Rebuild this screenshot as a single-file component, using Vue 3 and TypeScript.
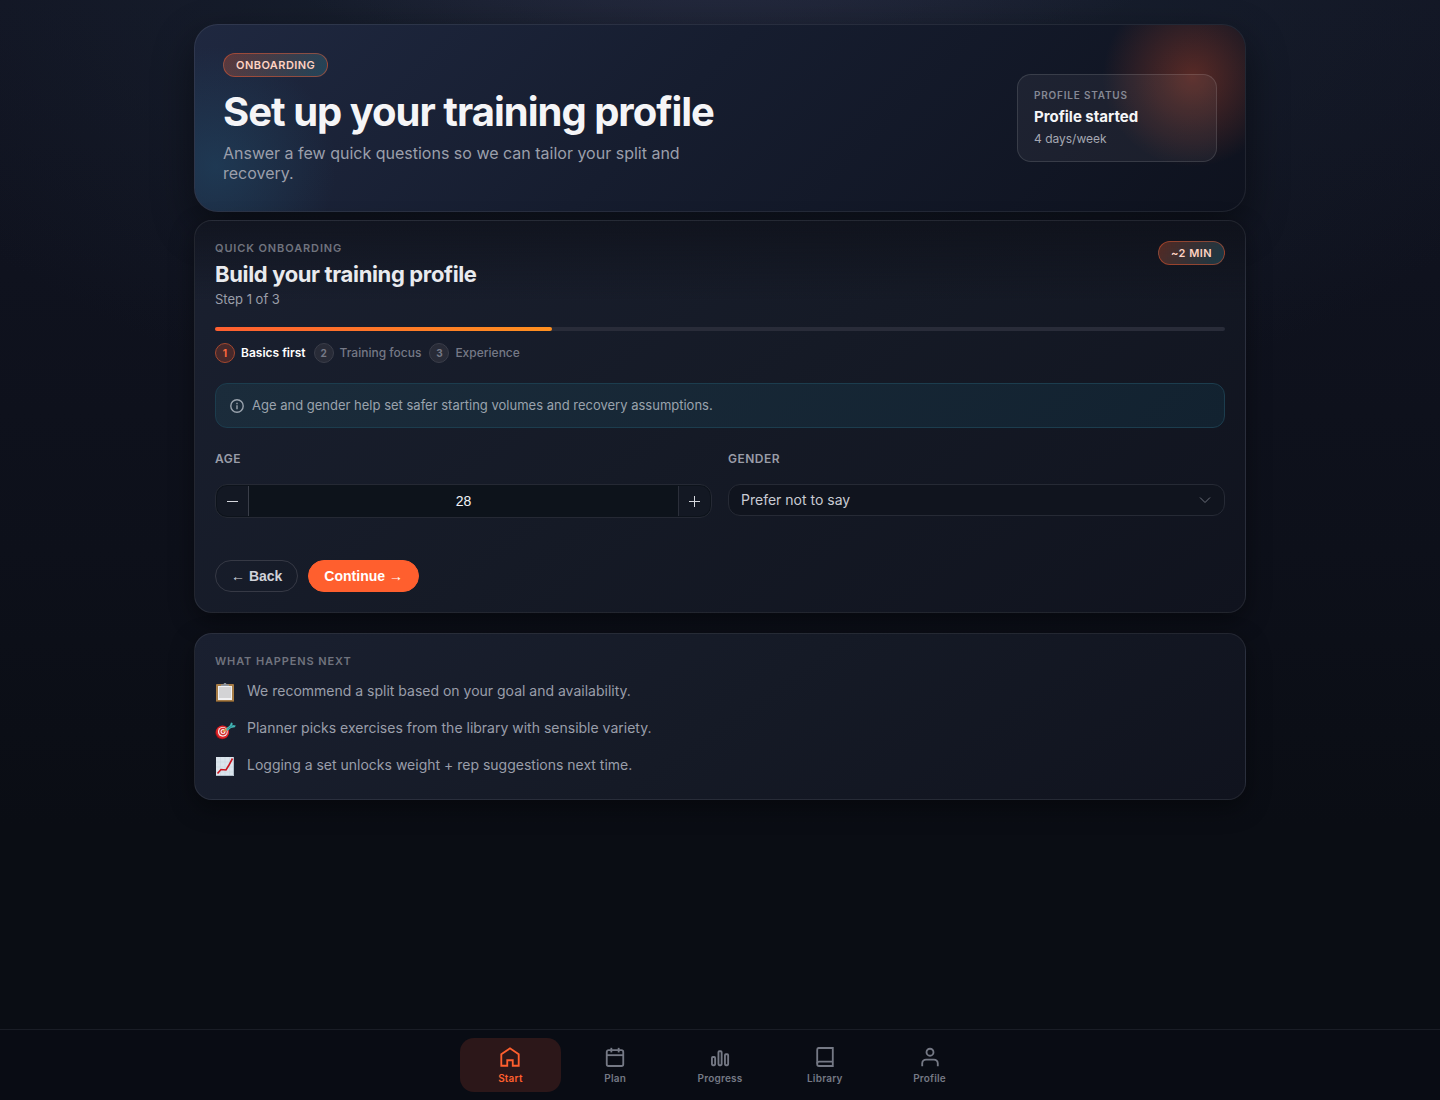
<script setup lang="ts">
import { ref } from 'vue'

const age = ref(28)
const gender = ref('na')
const step = ref(1)
const progress = 33.4

const steps = ['Basics first', 'Training focus', 'Experience']

const nextItems = [
  { icon: 'clipboard', text: 'We recommend a split based on your goal and availability.' },
  { icon: 'target', text: 'Planner picks exercises from the library with sensible variety.' },
  { icon: 'chart', text: 'Logging a set unlocks weight + rep suggestions next time.' },
]

const tabs = [
  { label: 'Start', paths: ['M2.5 9 12 2.5 21.5 9v12.5H15v-6H9v6H2.5z'] },
  {
    label: 'Plan',
    paths: [
      'M5 4.5h14a2 2 0 0 1 2 2v13.3a2 2 0 0 1-2 2H5a2 2 0 0 1-2-2V6.5a2 2 0 0 1 2-2z',
      'M3 10h18',
      'M8 2v5',
      'M16 2v5',
    ],
  },
  {
    label: 'Progress',
    paths: [
      'M4.2 12h1.5a1 1 0 0 1 1 1v7a1 1 0 0 1-1 1H4.2a1 1 0 0 1-1-1v-7a1 1 0 0 1 1-1z',
      'M11.3 5.7h1.5a1 1 0 0 1 1 1V20a1 1 0 0 1-1 1h-1.5a1 1 0 0 1-1-1V6.7a1 1 0 0 1 1-1z',
      'M18.4 9h1.5a1 1 0 0 1 1 1v10a1 1 0 0 1-1 1h-1.5a1 1 0 0 1-1-1V10a1 1 0 0 1 1-1z',
    ],
  },
  { label: 'Library', paths: ['M5 2.2h15.5v19.6H5.5a2 2 0 0 1-2-2V4a1.8 1.8 0 0 1 1.5-1.8z', 'M3.5 19a2 2 0 0 1 2-2h15'] },
  { label: 'Profile', paths: ['M12 3a3.8 3.8 0 1 1 0 7.6A3.8 3.8 0 0 1 12 3z', 'M3.5 22v-3a4.2 4.2 0 0 1 4.2-4.2h8.6a4.2 4.2 0 0 1 4.2 4.2v3'] },
]
</script>

<template>
  <div class="app">
    <main class="page">
      <header class="hero">
        <div class="hero-copy">
          <span class="pill">Onboarding</span>
          <h1>Set up your training profile</h1>
          <p>Answer a few quick questions so we can tailor your split and recovery.</p>
        </div>
        <aside class="status">
          <span class="status-label">Profile status</span>
          <strong>Profile started</strong>
          <span class="status-sub">4 days/week</span>
        </aside>
      </header>

      <section class="card form-card">
        <div class="card-head">
          <div>
            <div class="eyebrow">Quick onboarding</div>
            <h2>Build your training profile</h2>
            <p class="step-text">Step {{ step }} of 3</p>
          </div>
          <span class="pill">~2 min</span>
        </div>

        <div class="track"><div class="fill" :style="{ width: progress + '%' }"></div></div>

        <ol class="steps">
          <li v-for="(s, i) in steps" :key="s" :class="{ active: i + 1 === step }">
            <span class="dot">{{ i + 1 }}</span>{{ s }}
          </li>
        </ol>

        <div class="info">
          <svg width="14" height="14" viewBox="0 0 14 14" fill="none" stroke="currentColor" stroke-width="1.4" aria-hidden="true">
            <circle cx="7" cy="7" r="6.2" />
            <path d="M7 6.2v4M7 3.8v1.4" />
          </svg>
          <span>Age and gender help set safer starting volumes and recovery assumptions.</span>
        </div>

        <div class="fields">
          <div class="field">
            <label for="age">Age</label>
            <div class="stepper">
              <button type="button" aria-label="Decrease age" @click="age--">
                <svg width="11" height="11" viewBox="0 0 11 11" stroke="currentColor"><path d="M0 5.5h11" /></svg>
              </button>
              <input id="age" v-model="age" type="text" inputmode="numeric" />
              <button type="button" aria-label="Increase age" @click="age++">
                <svg width="11" height="11" viewBox="0 0 11 11" stroke="currentColor"><path d="M0 5.5h11M5.5 0v11" /></svg>
              </button>
            </div>
          </div>
          <div class="field">
            <label for="gender">Gender</label>
            <div class="select">
              <select id="gender" v-model="gender">
                <option value="na">Prefer not to say</option>
                <option value="f">Female</option>
                <option value="m">Male</option>
              </select>
              <svg width="12" height="12" viewBox="0 0 12 12" fill="none" stroke="currentColor" aria-hidden="true"><path d="M1 3.5l5 5 5-5" /></svg>
            </div>
          </div>
        </div>

        <div class="actions">
          <button type="button" class="btn ghost"><span class="arrow">←</span> Back</button>
          <button type="button" class="btn primary">Continue <span class="arrow">→</span></button>
        </div>
      </section>

      <section class="card">
        <div class="eyebrow">What happens next</div>
        <ul class="next">
          <li v-for="n in nextItems" :key="n.text">
            <svg v-if="n.icon === 'clipboard'" width="20" height="22" viewBox="0 -1 20 22" aria-hidden="true">
              <rect x="1" y="2" width="18" height="18" rx="1" fill="#a67c46" />
              <rect x="1" y="19" width="18" height="1" fill="#73532c" />
              <rect x="3" y="4" width="14" height="14" fill="#f1f1f3" />
              <rect x="4" y="5" width="12" height="11" fill="#d3d3d5" />
              <path d="M6 4V2.500h2.500L9 1h2l.5 1.500H14V4z" fill="#8b939e" />
            </svg>
            <svg v-else-if="n.icon === 'target'" width="20" height="22" viewBox="0 -4 20 22" aria-hidden="true">
              <ellipse cx="7.200" cy="10.500" rx="6.800" ry="6.800" fill="#a50f16" />
              <ellipse cx="7.600" cy="10" rx="6.500" ry="6.400" fill="#df2529" />
              <circle cx="7.800" cy="9.800" r="4.900" fill="#f3e9e7" />
              <circle cx="8" cy="9.600" r="3.800" fill="#d62b2d" />
              <circle cx="8" cy="9.600" r="2.500" fill="#f3e9e7" />
              <circle cx="8" cy="9.600" r="1.300" fill="#d62b2d" />
              <path d="M8 9.600l5-3.600" stroke="#d8a13a" stroke-width="1.400" />
              <path d="M11 6.800l4-3.600 1-2.700 1.600.4-.2 2.100 3.400.4-1 1.800-3.800.9-3.600 3z" fill="#43b6b5" />
              <path d="M12.500 7l5.500-3.800" stroke="#287f88" stroke-width=".8" />
            </svg>
            <svg v-else width="20" height="22" viewBox="0 -1 20 22" fill="none" aria-hidden="true">
              <rect x="1" y="1" width="18" height="19" fill="#dce5ed" />
              <path d="M1 6h18M1 11h18M1 16h18M5.500 1v19M10 1v19M14.500 1v19" stroke="#cbd7e1" stroke-width=".6" />
              <path d="M1 19.500h17.500V1" stroke="#a6b4bf" stroke-width=".8" />
              <path d="M2.500 17.500l3.500-4 5 .5 3-5 3.500-6.500" stroke="#c9151f" stroke-width="1.600" />
            </svg>
            <span>{{ n.text }}</span>
          </li>
        </ul>
      </section>
    </main>

    <nav class="tabbar">
      <div class="tabs">
        <a v-for="(t, i) in tabs" :key="t.label" href="#" class="tab" :class="{ current: i === 0 }">
          <svg width="22" height="22" viewBox="0 0 24 24" fill="none" stroke="currentColor" stroke-width="2" aria-hidden="true">
            <path v-for="d in t.paths" :key="d" :d="d" />
          </svg>
          <span>{{ t.label }}</span>
        </a>
      </div>
    </nav>
  </div>
</template>

<style>
body {
  background: #090c14;
}
</style>

<style scoped>
.app {
  box-sizing: border-box;
  min-height: 100vh;
  display: flex;
  flex-direction: column;
  font-family: Inter, "Liberation Sans", sans-serif;
  color: #f5f5f7;
  background:
    radial-gradient(500px 200px at 50% -10%, rgba(80, 70, 110, 0.4), transparent),
    radial-gradient(1200px 700px at 50% -10%, rgba(28, 40, 56, 0.8), transparent 80%),
    linear-gradient(180deg, #111422 0%, #0d101a 50%, #0a0d14 75%);
}

.app *,
.app *::before,
.app *::after {
  box-sizing: border-box;
}

.page {
  flex: 1;
  width: 100%;
  max-width: 1100px;
  margin: 0 auto;
  padding: 24px;
}

.hero {
  display: flex;
  align-items: center;
  justify-content: space-between;
  padding: 28px;
  border: 1px solid rgba(255, 255, 255, 0.08);
  border-radius: 24px;
  background:
    radial-gradient(circle 120px at 2% 76%, rgba(34, 84, 116, 0.42), transparent) padding-box,
    radial-gradient(circle 90px at 95% 28%, rgba(255, 90, 45, 0.3), transparent) padding-box,
    linear-gradient(135deg, #1f2840 0%, #161d2f 45%, #0e121e 100%) border-box;
  box-shadow: 0 16px 40px rgba(0, 0, 0, 0.45);
}

.hero-copy {
  max-width: 520px;
}

.pill {
  display: inline-block;
  height: 24px;
  padding: 0 12px;
  border: 1px solid rgba(255, 96, 48, 0.45);
  border-radius: 12px;
  background: linear-gradient(120deg, rgba(255, 96, 48, 0.28), rgba(45, 140, 160, 0.3));
  color: #ffd2c2;
  font-size: 11px;
  font-weight: 600;
  line-height: 22px;
  letter-spacing: 0.04em;
  text-transform: uppercase;
  white-space: nowrap;
}

h1 {
  margin: 12px 0 8px;
  font-size: 40px;
  font-weight: 700;
  line-height: 46px;
  letter-spacing: -0.025em;
  white-space: nowrap;
}

.hero p {
  margin: 0;
  color: #9b9fab;
  font-size: 16px;
  line-height: 20px;
}

.status {
  display: flex;
  flex-direction: column;
  width: 200px;
  padding: 12px 16px;
  border: 1px solid rgba(255, 255, 255, 0.12);
  border-radius: 14px;
  background: rgba(255, 255, 255, 0.05);
}

.status-label {
  color: #858894;
  font-size: 10px;
  font-weight: 600;
  line-height: 16px;
  letter-spacing: 0.08em;
  text-transform: uppercase;
}

.status strong {
  margin-top: 2px;
  font-size: 15px;
  font-weight: 700;
  line-height: 24px;
}

.status-sub {
  color: #a5a8b2;
  font-size: 12px;
  line-height: 20px;
}

.card {
  margin-top: 20px;
  padding: 20px;
  border: 1px solid rgba(255, 255, 255, 0.08);
  border-radius: 18px;
  background: linear-gradient(145deg, #1a2030 0%, #151a26 50%, #10131e 100%);
  box-shadow: 0 8px 24px rgba(0, 0, 0, 0.4);
}

.form-card {
  margin-top: 8px;
  background:
    linear-gradient(180deg, rgba(12, 14, 22, 0.6), transparent 80px),
    linear-gradient(145deg, #1a2030 0%, #151a26 50%, #10131e 100%);
}

.card-head {
  display: flex;
  justify-content: space-between;
  align-items: flex-start;
}

.eyebrow {
  color: #70737e;
  font-size: 11px;
  font-weight: 600;
  line-height: 14px;
  letter-spacing: 0.08em;
  text-transform: uppercase;
}

h2 {
  margin: 4px 0 2px;
  color: #e9eaee;
  font-size: 22px;
  font-weight: 700;
  line-height: 30px;
  letter-spacing: -0.016em;
}

.step-text {
  margin: 0;
  color: #9a9ea9;
  font-size: 13px;
  line-height: 16px;
}

.track {
  height: 4px;
  margin-top: 20px;
  border-radius: 2px;
  background: #292c39;
}

.fill {
  height: 4px;
  border-radius: 2px;
  background: linear-gradient(90deg, #ff5f30, #ff9020);
}

.steps {
  display: flex;
  gap: 8px;
  margin: 12px 0 20px;
  padding: 0;
  list-style: none;
}

.steps li {
  display: flex;
  align-items: center;
  gap: 6px;
  color: #757986;
  font-size: 12px;
  font-weight: 500;
  line-height: 20px;
}

.steps .active {
  color: #fff;
  font-weight: 600;
}

.dot {
  width: 20px;
  height: 20px;
  border: 1px solid #3a3d49;
  border-radius: 50%;
  background: #282b37;
  font-size: 10px;
  font-weight: 700;
  line-height: 18px;
  text-align: center;
}

.active .dot {
  border-color: #a4482f;
  background: #47292b;
  color: #ff6a3e;
}

.info {
  display: flex;
  align-items: center;
  gap: 8px;
  padding: 12px 14px;
  border: 1px solid #1c3d4e;
  border-radius: 12px;
  background: linear-gradient(135deg, #1b2c3b, #122230);
  color: #9aa3ad;
  font-size: 13px;
  line-height: 19px;
}

.fields {
  display: grid;
  grid-template-columns: 1fr 1fr;
  gap: 16px;
  margin-top: 20px;
}

.field label {
  display: block;
  margin-bottom: 14px;
  color: #9a9da8;
  font-size: 12px;
  font-weight: 600;
  line-height: 22px;
  letter-spacing: 0.04em;
  text-transform: uppercase;
}

.stepper {
  display: flex;
  height: 34px;
  padding: 1px;
  border: 1px solid #252934;
  border-radius: 12px;
  background: #0d131b;
}

.stepper button {
  display: flex;
  align-items: center;
  justify-content: center;
  width: 32px;
  padding: 0;
  border: 0;
  border-left: 1px solid #2b2f3a;
  border-radius: 0 10px 10px 0;
  background: #131823;
  color: #d5d7dd;
}

.stepper button:first-child {
  border-left: 0;
  border-right: 1px solid #3a3e49;
  border-radius: 10px 0 0 10px;
}

.stepper input {
  flex: 1;
  min-width: 0;
  padding: 0;
  border: 0;
  outline: 0;
  background: transparent;
  color: #f1f2f5;
  font: 14px/20px "Liberation Sans", Arial, sans-serif;
  text-align: center;
}

.select {
  display: grid;
  align-items: center;
}

.select select {
  grid-area: 1 / 1;
  width: 100%;
  height: 32px;
  padding: 0 12px;
  border: 1px solid #262a35;
  border-radius: 12px;
  outline: 0;
  appearance: none;
  background: #10141e;
  color: #c9cbd3;
  font: 14px/20px Inter, "Liberation Sans", sans-serif;
}

.select svg {
  grid-area: 1 / 1;
  justify-self: end;
  margin-right: 14px;
  color: #6c707b;
  pointer-events: none;
}

.actions {
  display: flex;
  gap: 10px;
  margin-top: 42px;
}

.btn {
  height: 32px;
  padding: 0 15px;
  border: 1px solid #363945;
  border-radius: 16px;
  background: transparent;
  color: #d0d2d9;
  font-family: "Liberation Sans", Arial, sans-serif;
  font-size: 14px;
  font-weight: 700;
  line-height: 16px;
}

.arrow {
  font-family: "Liberation Serif", "Times New Roman", serif;
  font-weight: 400;
}

.primary {
  border-color: #ff5f2e;
  background: #ff5f2e;
  color: #fff;
}

.next {
  display: flex;
  flex-direction: column;
  gap: 12px;
  margin: 10px 0 2px;
  padding: 0;
  list-style: none;
  color: #9a9eaa;
  font-size: 14px;
  line-height: 25px;
}

.next li {
  display: flex;
  align-items: flex-end;
  gap: 12px;
}

.next svg {
  overflow: visible;
}

.tabbar {
  padding: 8px 0;
  border-top: 1px solid #1a1d26;
  background: #090c14;
}

.tabs {
  display: grid;
  grid-template-columns: repeat(5, 1fr);
  gap: 4px;
  max-width: 520px;
  margin: 0 auto;
}

.tab {
  display: flex;
  flex-direction: column;
  align-items: center;
  gap: 4px;
  padding: 8px 0;
  border-radius: 14px;
  color: #757985;
  font-size: 10px;
  font-weight: 600;
  line-height: 12px;
  letter-spacing: 0.02em;
  text-decoration: none;
}

.current {
  background: #2c1719;
  color: #ff5f2e;
}
</style>
